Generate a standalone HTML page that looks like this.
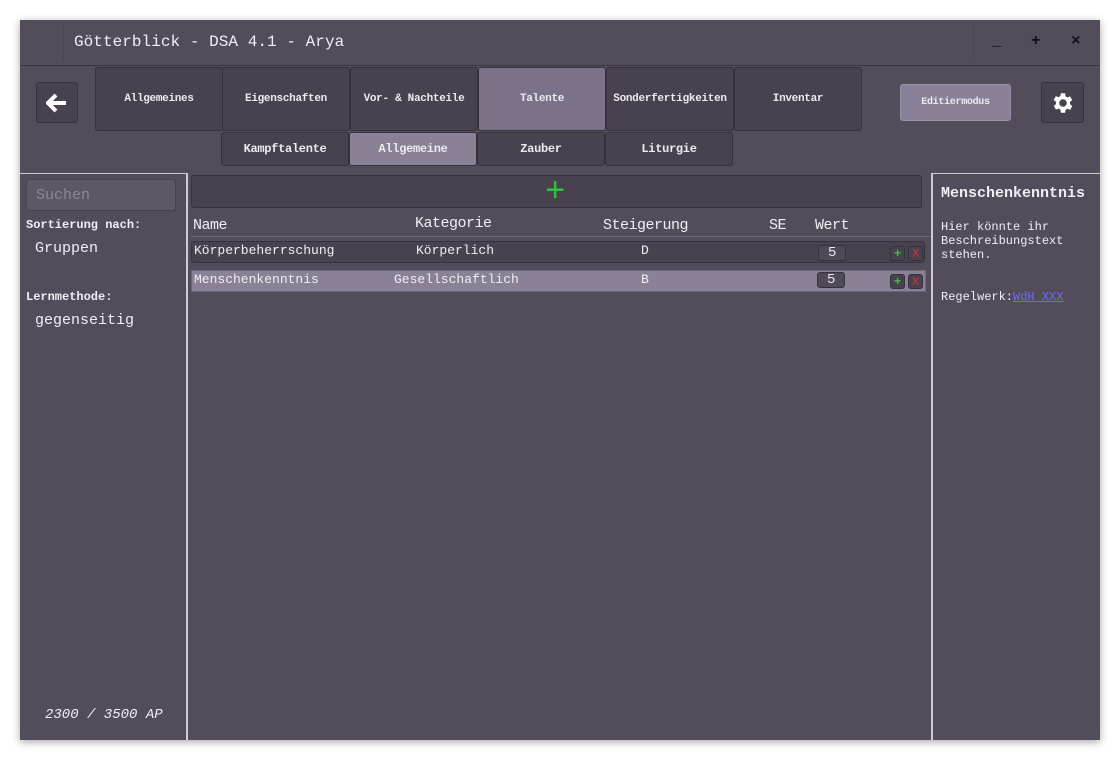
<!DOCTYPE html>
<html><head><meta charset="utf-8"><style>
*{box-sizing:border-box;margin:0;padding:0}
body{width:1120px;height:760px;background:#fff;position:relative;overflow:hidden;font-family:"Liberation Mono","DejaVu Sans Mono",monospace;color:#f0eef2}
#win{position:absolute;left:20px;top:20px;width:1080px;height:720px;background:#534d5b;box-shadow:0 2px 8px rgba(0,0,0,.35)}
.a{position:absolute}
.btn{position:absolute;background:#48424f;border:1px solid #36313c;border-radius:3px;display:flex;align-items:center;justify-content:center;font-size:11px;font-weight:bold;color:#ece9ef;letter-spacing:-.3px}
.t{position:absolute;white-space:nowrap}
</style></head><body>
<div id="win">
 <div class="a" style="left:0;top:0;width:1080px;height:46px;border-bottom:1px solid #3a3540"></div>
 <div class="a" style="left:43px;top:6px;width:1px;height:34px;background:#4a4551"></div>
 <div class="a" style="left:953px;top:6px;width:1px;height:34px;background:#4a4551"></div>
 <div class="t" style="left:54px;top:13px;font-size:16px;letter-spacing:.05px">Götterblick - DSA 4.1 - Arya</div>
 <div class="t" style="left:972px;top:12px;font-size:16px;font-weight:bold;color:#111">_</div>
 <div class="t" style="left:1011px;top:12px;font-size:16px;font-weight:bold;color:#111">+</div>
 <div class="t" style="left:1051px;top:12px;font-size:16px;font-weight:bold;color:#111">×</div>

 <div class="btn" style="left:16px;top:62px;width:42px;height:41px">
  <svg width="22" height="20" viewBox="0 0 22 20"><path d="M10 2L2 10l8 8M2 10h18" stroke="#fff" stroke-width="4" fill="none"/></svg></div>
 <div class="btn" style="left:75px;top:47px;width:128px;height:64px">Allgemeines</div>
 <div class="btn" style="left:202px;top:47px;width:128px;height:64px">Eigenschaften</div>
 <div class="btn" style="left:330px;top:47px;width:128px;height:64px">Vor- &amp; Nachteile</div>
 <div class="btn" style="left:458px;top:47px;width:128px;height:64px;background:#7b7289">Talente</div>
 <div class="btn" style="left:586px;top:47px;width:128px;height:64px">Sonderfertigkeiten</div>
 <div class="btn" style="left:714px;top:47px;width:128px;height:64px">Inventar</div>
 <div class="btn" style="left:201px;top:112px;width:128px;height:34px;font-size:12px">Kampftalente</div>
 <div class="btn" style="left:329px;top:112px;width:128px;height:34px;font-size:12px;background:#8a8197">Allgemeine</div>
 <div class="btn" style="left:457px;top:112px;width:128px;height:34px;font-size:12px">Zauber</div>
 <div class="btn" style="left:585px;top:112px;width:128px;height:34px;font-size:12px">Liturgie</div>
 <div class="btn" style="left:880px;top:64px;width:111px;height:37px;background:#8a8098;border-color:#9a90a8;font-size:10px">Editiermodus</div>
 <div class="btn" style="left:1021px;top:62px;width:43px;height:41px">
  <svg width="26" height="26" viewBox="0 0 24 24"><path fill="#fff" d="M19.4 13a7.5 7.5 0 000-2l2.1-1.6-2-3.5-2.5 1a7.3 7.3 0 00-1.7-1L15 3h-4l-.4 2.7a7.3 7.3 0 00-1.7 1l-2.5-1-2 3.5L6.6 11a7.5 7.5 0 000 2l-2.1 1.6 2 3.5 2.5-1a7.3 7.3 0 001.7 1L11 21h4l.4-2.7a7.3 7.3 0 001.7-1l2.5 1 2-3.5zM13 15.5a3.5 3.5 0 110-7 3.5 3.5 0 010 7z" transform="translate(-1 0)"/></svg></div>

 <div class="a" style="left:0;top:153px;width:168px;height:567px;border-top:1px solid #cfcbd3;border-right:2px solid #cfcbd3"></div>
 <div class="a" style="left:6px;top:159px;width:150px;height:32px;background:#5d5766;border:1px solid #48424f;border-radius:3px"></div>
 <div class="t" style="left:16px;top:167px;font-size:15px;color:#8e8896">Suchen</div>
 <div class="t" style="left:6px;top:198px;font-size:12px;font-weight:bold">Sortierung nach:</div>
 <div class="t" style="left:15px;top:220px;font-size:15px">Gruppen</div>
 <div class="t" style="left:6px;top:270px;font-size:12px;font-weight:bold">Lernmethode:</div>
 <div class="t" style="left:15px;top:292px;font-size:15px">gegenseitig</div>
 <div class="t" style="left:25px;top:687px;font-size:14px;font-style:italic">2300 / 3500 AP</div>

 <div class="a" style="left:171px;top:155px;width:731px;height:33px;background:#48424f;border:1px solid #36313c;border-radius:3px"></div>
 <div class="t" style="left:525px;top:156px;font-size:34px;color:#35c040;line-height:34px">+</div>
 <div class="t" style="left:173px;top:197px;font-size:15px;letter-spacing:-.5px">Name</div>
 <div class="t" style="left:395px;top:195px;font-size:15px;letter-spacing:-.5px">Kategorie</div>
 <div class="t" style="left:583px;top:197px;font-size:15px;letter-spacing:-.5px">Steigerung</div>
 <div class="t" style="left:749px;top:197px;font-size:15px;letter-spacing:-.5px">SE</div>
 <div class="t" style="left:795px;top:197px;font-size:15px;letter-spacing:-.5px">Wert</div>
 <div class="a" style="left:171px;top:216px;width:740px;height:1px;background:#6b6674"></div>
 <div class="a" style="left:171px;top:221px;width:734px;height:22px;background:#48424f;border:1px solid #36313c;border-radius:3px"></div>
 <div class="a" style="left:171px;top:250px;width:735px;height:22px;background:#8a8197;border:1px solid #6e6679"></div>
 <div class="t" style="left:174px;top:223px;font-size:13px">Körperbeherrschung</div>
 <div class="t" style="left:396px;top:223px;font-size:13px">Körperlich</div>
 <div class="t" style="left:621px;top:223px;font-size:13px">D</div>
 <div class="t" style="left:174px;top:252px;font-size:13px">Menschenkenntnis</div>
 <div class="t" style="left:374px;top:252px;font-size:13px">Gesellschaftlich</div>
 <div class="t" style="left:621px;top:252px;font-size:13px">B</div>
 <div class="btn" style="left:798px;top:225px;width:28px;height:16px;background:#4f4958;font-size:14px;font-weight:normal">5</div>
 <div class="btn" style="left:797px;top:252px;width:28px;height:16px;background:#4f4958;font-size:14px;font-weight:normal">5</div>
 <div class="btn" style="left:870px;top:226px;width:15px;height:15px;color:#3c3;font-size:12px">+</div>
 <div class="btn" style="left:888px;top:226px;width:15px;height:15px;color:#d33;font-size:12px;font-weight:normal">X</div>
 <div class="btn" style="left:870px;top:254px;width:15px;height:15px;color:#3c3;font-size:12px">+</div>
 <div class="btn" style="left:888px;top:254px;width:15px;height:15px;color:#d33;font-size:12px;font-weight:normal">X</div>

 <div class="a" style="left:911px;top:153px;width:169px;height:567px;border-top:1px solid #cfcbd3;border-left:2px solid #cfcbd3"></div>
 <div class="t" style="left:921px;top:165px;font-size:15px;font-weight:bold">Menschenkenntnis</div>
 <div class="t" style="left:921px;top:200px;font-size:12px;line-height:14px">Hier könnte ihr<br>Beschreibungstext<br>stehen.</div>
 <div class="t" style="left:921px;top:270px;font-size:12px">Regelwerk:<span style="color:#6a6aff;text-decoration:underline">WdH XXX</span></div>
</div>
</body></html>
